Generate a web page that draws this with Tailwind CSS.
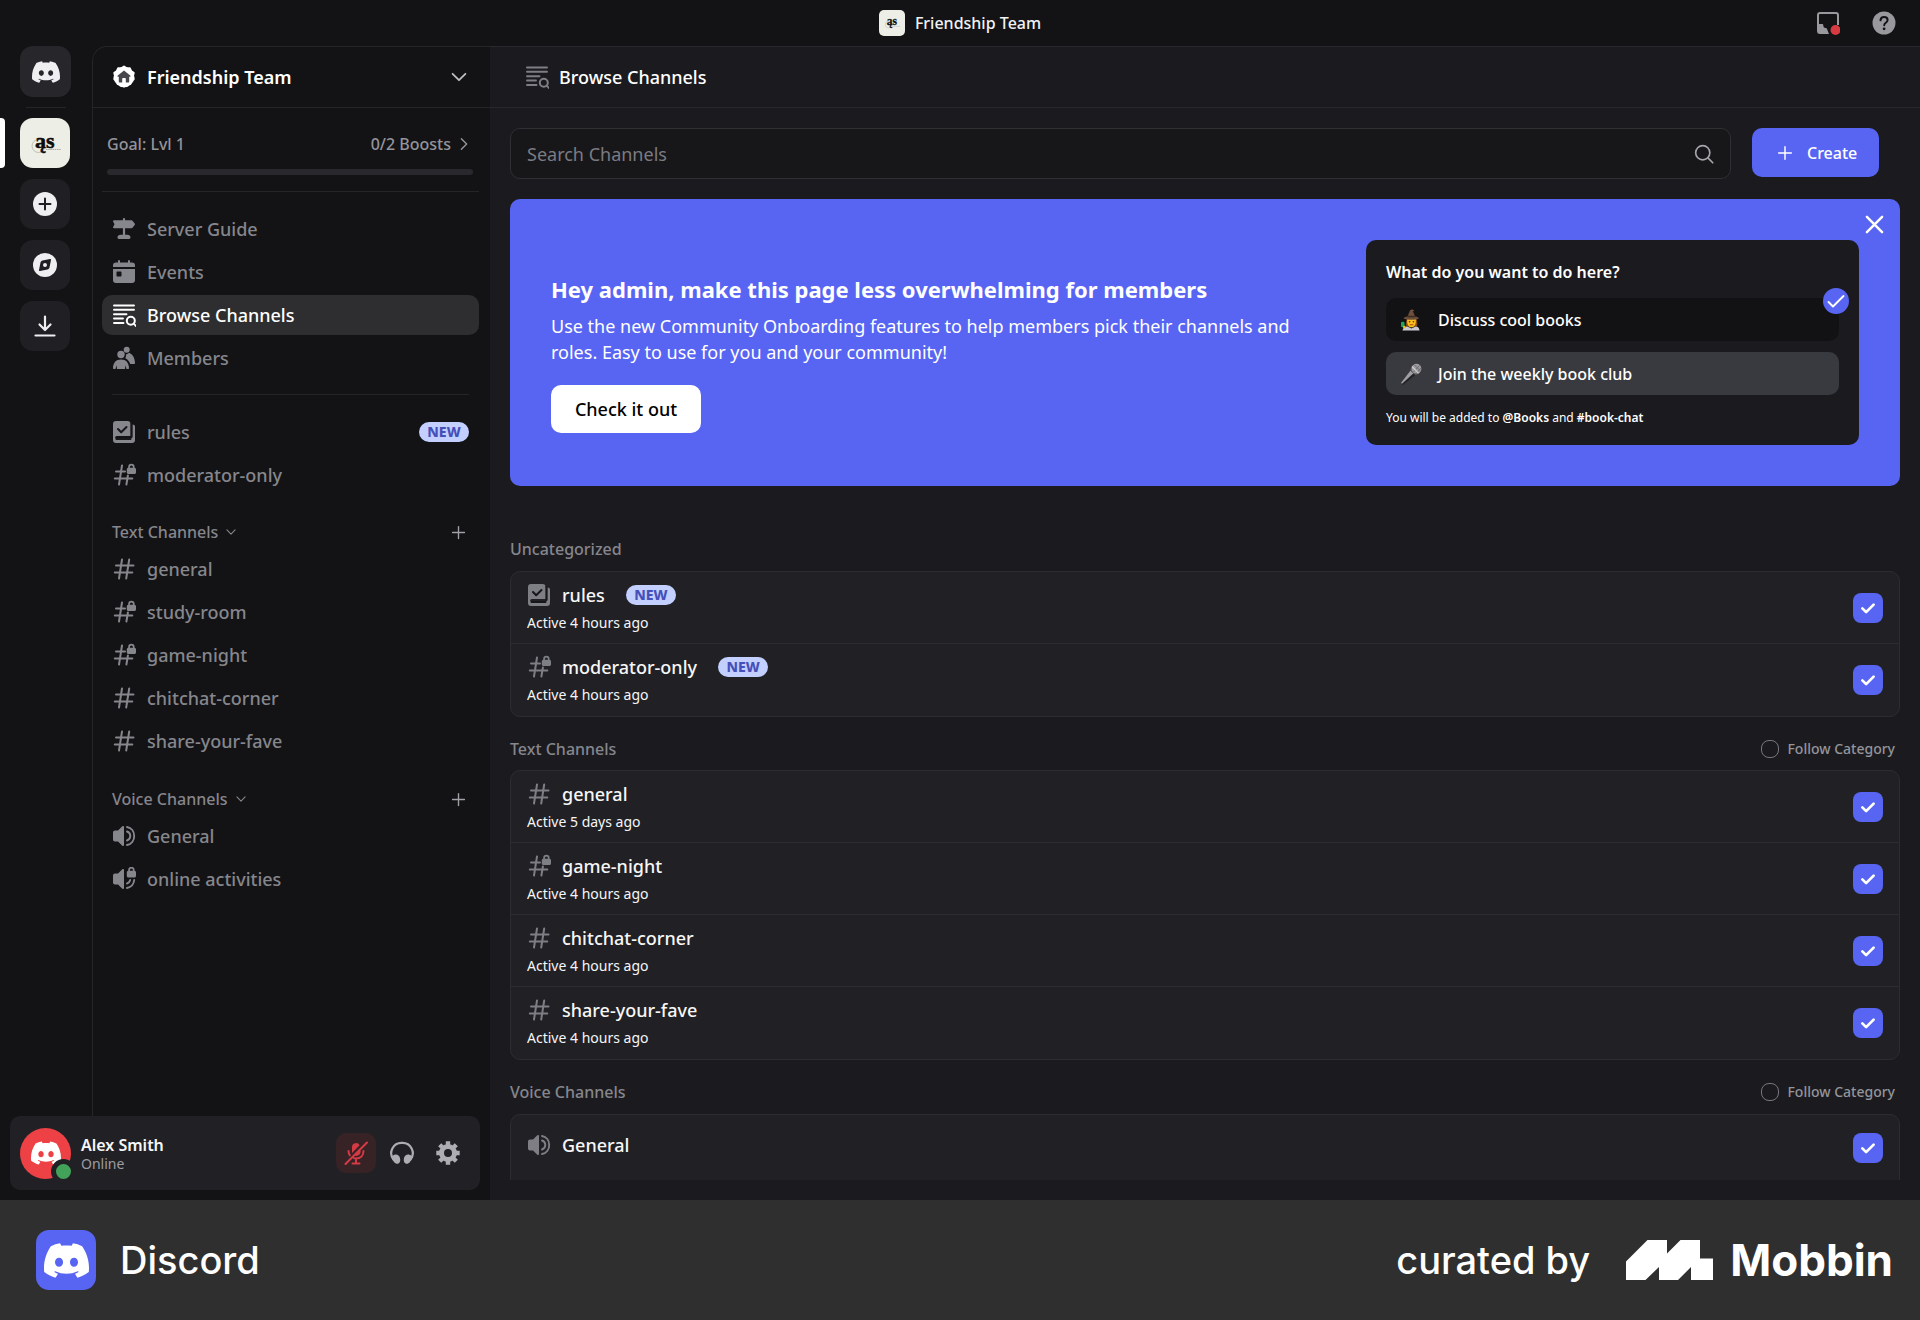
<!DOCTYPE html>
<html lang="en">
<head>
<meta charset="utf-8">
<title>Discord | Browse Channels</title>
<script src="https://cdn.jsdelivr.net/npm/@tailwindcss/browser@4"></script>
</head>
<body class="flex h-screen flex-col overflow-hidden bg-[#131315] font-['Noto_Sans',sans-serif] text-[18px] leading-6 text-[#86868d]">

<!-- Icon set -->
<svg class="hidden" aria-hidden="true">
  <symbol id="discord" viewBox="0 0 24 24"><path fill="currentColor" d="M20.317 4.3698a19.7913 19.7913 0 00-4.8851-1.5152.0741.0741 0 00-.0785.0371c-.211.3753-.4447.8648-.6083 1.2495-1.8447-.2762-3.68-.2762-5.4868 0-.1636-.3933-.4058-.8742-.6177-1.2495a.077.077 0 00-.0785-.037 19.7363 19.7363 0 00-4.8852 1.515.0699.0699 0 00-.0321.0277C.5334 9.0458-.319 13.5799.0992 18.0578a.0824.0824 0 00.0312.0561c2.0528 1.5076 4.0413 2.4228 5.9929 3.0294a.0777.0777 0 00.0842-.0276c.4616-.6304.8731-1.2952 1.226-1.9942a.076.076 0 00-.0416-.1057c-.6528-.2476-1.2743-.5495-1.8722-.8923a.077.077 0 01-.0076-.1277c.1258-.0943.2517-.1923.3718-.2914a.0743.0743 0 01.0776-.0105c3.9278 1.7933 8.18 1.7933 12.0614 0a.0739.0739 0 01.0785.0095c.1202.099.246.1981.3728.2924a.077.077 0 01-.0066.1276 12.2986 12.2986 0 01-1.873.8914.0766.0766 0 00-.0407.1067c.3604.698.7719 1.3628 1.225 1.9932a.076.076 0 00.0842.0286c1.961-.6067 3.9495-1.5219 6.0023-3.0294a.077.077 0 00.0313-.0552c.5004-5.177-.8382-9.6739-3.5485-13.6604a.061.061 0 00-.0312-.0286zM8.02 15.3312c-1.1825 0-2.1569-1.0857-2.1569-2.419 0-1.3332.9555-2.4189 2.157-2.4189 1.2108 0 2.1757 1.0952 2.1568 2.419 0 1.3332-.9555 2.4189-2.1569 2.4189zm7.9748 0c-1.1825 0-2.1569-1.0857-2.1569-2.419 0-1.3332.9554-2.4189 2.1569-2.4189 1.2108 0 2.1757 1.0952 2.1568 2.419 0 1.3332-.946 2.4189-2.1568 2.4189Z"/></symbol>
  <symbol id="hash" viewBox="0 0 24 24"><path fill="none" stroke="currentColor" stroke-width="2" stroke-linecap="round" d="M10 2.5 7 21.500M17.200 2.500l-3 19M4 8.500h17.500M2.800 15.500h17.500"/></symbol>
  <symbol id="hash-lock" viewBox="0 0 24 24"><path fill="none" stroke="currentColor" stroke-width="2" stroke-linecap="round" d="M10 2.500 7 21.500M15.900 12.500l-1.500 9M4 8.500h9M2.800 15.500h17.500"/><path fill="currentColor" fill-rule="evenodd" d="M16.200 4.800V4a3.200 3.200 0 0 1 6.400 0v.8c.8.100 1.400.7 1.400 1.500v3.200c0 .8-.7 1.500-1.500 1.500h-6.200c-.8 0-1.500-.7-1.500-1.500V6.300c0-.8.600-1.400 1.400-1.500Zm1.700 0h3V4a1.500 1.500 0 0 0-3 0Z"/></symbol>
  <symbol id="browse" viewBox="0 0 24 24"><path fill="none" stroke="currentColor" stroke-width="1.9" stroke-linecap="round" d="M2 2.500h20M2 6.800h20M2 11.200h12.500M2 15.500h9M2 20h9.500M21.700 20.700 24 23"/><circle cx="18.800" cy="17.800" r="4" fill="none" stroke="currentColor" stroke-width="2"/></symbol>
  <symbol id="guide" viewBox="0 0 24 24"><path fill="currentColor" d="M10.900 2a1.100 1.100 0 0 1 2.200 0v1.300h6.300c.5 0 1 .2 1.300.6l2 2.500c.4.500.4 1.200 0 1.700l-2 2.500c-.3.400-.8.600-1.300.6h-6.300v6.600h2.400c1.700 0 3 1.100 3 2.700 0 .8-.6 1.400-1.400 1.400H6.900c-.8 0-1.400-.6-1.400-1.400 0-1.600 1.300-2.700 3-2.700h2.400v-6.600H2c-.8 0-1.200-.8-.8-1.400L2.500 7.200 1.200 4.700c-.4-.6 0-1.400.8-1.400h8.900Z"/></symbol>
  <symbol id="calendar" viewBox="0 0 24 24"><path fill="currentColor" d="M6 1a1 1 0 0 1 2 0v1.500h8V1a1 1 0 0 1 2 0v1.500h2A3 3 0 0 1 23 5.500V7H1V5.500a3 3 0 0 1 3-3h2Z"/><path fill="currentColor" fill-rule="evenodd" d="M1 9h22v11a3 3 0 0 1-3 3H4a3 3 0 0 1-3-3Zm3.500 3.200v3.600c0 .4.300.7.700.7h3.600c.4 0 .7-.3.700-.7v-3.600c0-.4-.3-.7-.7-.7H5.200c-.4 0-.7.300-.7.700Z"/></symbol>
  <symbol id="members" viewBox="0 0 24 24"><circle cx="14.700" cy="3.800" r="3" fill="currentColor"/><circle cx="9" cy="8.500" r="3.700" fill="currentColor"/><path fill="currentColor" d="M1 22.300c0-5.400 3-8.800 8-8.800s8 3.400 8 8.800c0 .5-.3.700-.8.700h-1.700l-1-3.800L13 23H5l-.5-3.800-1 3.800H1.800c-.5 0-.8-.2-.8-.7ZM14 8.200c1.200 0 2.300-.6 3-1.500 3.600 1.500 6 5.300 6 10.300 0 .6-.4 1-1 1h-3.800c-.8-2.300-2.300-4.400-4.900-5.700a5 5 0 0 0 .7-4.100Z"/></symbol>
  <symbol id="rules" viewBox="0 0 24 24"><path fill="currentColor" fill-rule="evenodd" d="M4 1h11.500a3 3 0 0 1 3 3v12H5a2 2 0 0 0-1.800 1.200c-.3.700.2 1.300.9 1.300h14.400a2 2 0 0 0 2-2V4.500c1.500 0 2.500.8 2.500 2V20a3 3 0 0 1-3 3H4a3 3 0 0 1-3-3V4a3 3 0 0 1 3-3Z"/><path fill="none" stroke="#17171a" stroke-width="2" stroke-linecap="round" stroke-linejoin="round" d="m6 9 3.200 3.200L14.500 7M4.500 19h14"/><path d="M19.500 3v14.500" stroke="#17171a" stroke-width="1.700"/></symbol>
  <symbol id="speaker" viewBox="0 0 24 24"><path fill="currentColor" d="M12 3v18a1 1 0 0 1-1.700.7L6 17.500H3a2 2 0 0 1-2-2v-7a2 2 0 0 1 2-2h3l4.300-4.200A1 1 0 0 1 12 3Z"/><path fill="none" stroke="currentColor" stroke-width="1.900" stroke-linecap="round" d="M15 7.500c2.300.8 3.300 2.500 3.300 4.500s-1 3.700-3.300 4.500M15 3c4.500.8 7.200 4.500 7.200 9s-2.700 8.200-7.200 9"/></symbol>
  <symbol id="speaker-lock" viewBox="0 0 24 24"><path fill="currentColor" d="M12 3v18a1 1 0 0 1-1.700.7L6 17.500H3a2 2 0 0 1-2-2v-7a2 2 0 0 1 2-2h3l4.300-4.200A1 1 0 0 1 12 3Z"/><path fill="none" stroke="currentColor" stroke-width="1.900" stroke-linecap="round" d="M18.200 13c-.4 1.700-1.500 3-3.200 3.500M22.200 13c-.5 4.200-3.200 7.300-7.200 8"/><path fill="currentColor" fill-rule="evenodd" d="M16.200 3.800V3a3.200 3.200 0 0 1 6.400 0v.8c.8.100 1.400.7 1.400 1.500v3.700c0 .8-.7 1.500-1.500 1.500h-6.200c-.8 0-1.500-.7-1.500-1.500V5.300c0-.8.600-1.400 1.400-1.500Zm1.700 0h3V3a1.500 1.500 0 0 0-3 0Z"/></symbol>
  <symbol id="chevron" viewBox="0 0 24 24"><path fill="none" stroke="currentColor" stroke-width="1.900" stroke-linecap="round" stroke-linejoin="round" d="m5 8.500 7 7 7-7"/></symbol>
  <symbol id="plus" viewBox="0 0 24 24"><path fill="none" stroke="currentColor" stroke-width="2.200" stroke-linecap="round" d="M12 2.500v19M2.500 12h19"/></symbol>
  <symbol id="check" viewBox="0 0 24 24"><path fill="none" stroke="currentColor" stroke-width="3.600" stroke-linecap="round" stroke-linejoin="round" d="m4.500 12.500 5 5 10-10"/></symbol>
  <symbol id="crest" viewBox="0 0 50 50"><rect width="50" height="50" fill="#edeee6"/><circle cx="18.500" cy="28" r="6.500" fill="none" stroke="#a9aaa2" stroke-width=".7"/><path d="M26 31.500h15" stroke="#a9aaa2" stroke-width="1" stroke-dasharray="1.500 .7"/><text x="15" y="29.500" font-family="Liberation Serif, serif" font-weight="700" font-size="22" fill="#0b0b0b" stroke="#0b0b0b" stroke-width=".5">ąs</text></symbol>
</svg>

<header class="grid h-[46px] shrink-0 grid-cols-[1fr_auto_1fr] items-center">
  <div class="col-start-2 flex items-center gap-[10px] text-[16px] font-medium text-[#f1f1f3]">
    <svg class="size-[26px] rounded-[5px]"><use href="#crest"/></svg>
    <span>Friendship Team</span>
  </div>
  <div class="flex items-center justify-end gap-8 pr-6 text-[#98989d]">
    <button aria-label="Inbox"><svg class="block size-6" viewBox="0 0 24 24"><path fill="currentColor" fill-rule="evenodd" d="M4 1h16a3 3 0 0 1 3 3v10h-2V4a1.300 1.300 0 0 0-1-1H4a1 1 0 0 0-1 1v9h3c.8 0 1.300.5 1.300 1.300 0 1.700.8 2.700 2.200 2.700.9 0 1.400.5 1.600 1.300L13 23H4a3 3 0 0 1-3-3V4a3 3 0 0 1 3-3Z"/><circle cx="19.500" cy="19" r="5" fill="#d83a42"/></svg></button>
    <button aria-label="Help"><svg class="block size-6" viewBox="0 0 24 24"><circle cx="12" cy="12" r="11.500" fill="currentColor"/><path d="M8.500 9.300c.2-2 1.600-3.300 3.600-3.300s3.500 1.300 3.500 3.100c0 2.700-3.400 2.600-3.400 5.100" fill="none" stroke="#131315" stroke-width="2" stroke-linecap="round"/><circle cx="12.100" cy="17.800" r="1.400" fill="#131315"/></svg></button>
  </div>
</header>

<div class="flex min-h-0 flex-1">
  <div class="flex w-[490px] shrink-0 flex-col">
    <div class="flex min-h-0 flex-1">
      <!-- Server rail -->
      <nav aria-label="Servers" class="flex w-[92px] shrink-0 flex-col gap-[11px] text-[#efeff1]">
        <a href="#" aria-label="Direct Messages" class="ml-5 grid size-[51px] place-items-center rounded-[13px] bg-[#27272b]"><svg class="size-7"><use href="#discord"/></svg></a>
        <hr class="-my-px ml-[26px] w-10 border-[#252528]">
        <a href="#" aria-label="Friendship Team" class="flex items-center gap-[15px]"><span class="h-[50px] w-[5px] rounded-r-[4px] bg-white"></span><svg class="size-[50px] rounded-[13px]"><use href="#crest"/></svg></a>
        <a href="#" aria-label="Add a Server" class="ml-5 grid size-[50px] place-items-center rounded-[13px] bg-[#202024]"><svg class="size-6" viewBox="0 0 24 24"><circle cx="12" cy="12" r="12" fill="currentColor"/><path d="M12 6.500v11M6.500 12h11" stroke="#202024" stroke-width="2" stroke-linecap="round"/></svg></a>
        <a href="#" aria-label="Discover" class="ml-5 grid size-[50px] place-items-center rounded-[13px] bg-[#202024]"><svg class="size-6" viewBox="0 0 24 24"><circle cx="12" cy="12" r="12" fill="currentColor"/><path fill="#202024" fill-rule="evenodd" d="M9.500 7.500 17 6c.6-.1 1.100.4 1 1l-1.500 7.500c-.3 1-1 1.700-2 2L7 18c-.6.100-1.100-.4-1-1l1.500-7.500c.3-1 1-1.700 2-2ZM12 14a2 2 0 1 0 0-4 2 2 0 0 0 0 4Z"/></svg></a>
        <a href="#" aria-label="Download Apps" class="ml-5 grid size-[50px] place-items-center rounded-[13px] bg-[#202024]"><svg class="size-6" viewBox="0 0 24 24"><path fill="none" stroke="currentColor" stroke-width="2.200" stroke-linecap="round" stroke-linejoin="round" d="M12 2.500v13M6.500 10.500l5.500 5.500 5.500-5.500M2.500 21.500h19"/></svg></a>
      </nav>

      <!-- Channel sidebar -->
      <aside class="min-w-0 flex-1 rounded-tl-[15px] border-t border-l border-[#252528]">
        <button class="flex h-[61px] w-full items-center gap-[11px] border-b border-[#252528] pr-5 pl-[19px] text-left font-semibold text-white">
          <svg class="size-6" viewBox="0 0 24 24"><path fill="#fff" stroke="#fff" stroke-width="2" stroke-linejoin="round" d="m12 1.500 2.600 1.900 3.200-.2 1.200 3 2.700 1.700-.8 3.100.8 3.100-2.700 1.700-1.200 3-3.200-.2L12 21.500l-2.600-2.900-3.200.2-1.200-3-2.700-1.700.8-3.100L2.300 7.900 5 6.200l1.200-3 3.200.2Z"/><circle cx="12" cy="12" r="10.300" fill="#fff"/><path fill="#46464c" d="m12 5.500 6.200 5c.6.600.4 1.300-.4 1.300h-.6v4.700c0 .7-.3 1-1 1h-2.400v-3.700c0-.5-.3-.8-.8-.8h-2c-.5 0-.8.300-.8.800v3.700H7.800c-.7 0-1-.3-1-1v-4.700h-.6c-.8 0-1-.7-.4-1.300Z"/></svg>
          <span class="flex-1">Friendship Team</span>
          <svg class="size-[22px] text-[#c0c0c4]"><use href="#chevron"/></svg>
        </button>

        <div class="mr-[11px] ml-[9px] border-b border-[#252528] pt-6 pr-[6px] pb-4 pl-[5px]">
          <div class="flex items-center text-[16px] font-medium text-[#94949b]">
            <span class="flex-1">Goal: Lvl 1</span>
            <a href="#" class="flex items-center gap-1">0/2 Boosts <svg class="size-[18px] -rotate-90"><use href="#chevron"/></svg></a>
          </div>
          <div class="mt-[13px] h-[6px] rounded-[3px] bg-[#29292d]"></div>
        </div>

        <nav aria-label="Channels" class="mt-[17px] mr-[11px] ml-[9px] font-medium">
          <ul class="flex flex-col gap-[3px]">
            <li><a href="#" class="flex h-10 items-center gap-[11px] rounded-[10px] px-[10px]"><svg class="size-6"><use href="#guide"/></svg>Server Guide</a></li>
            <li><a href="#" class="flex h-10 items-center gap-[11px] rounded-[10px] px-[10px]"><svg class="size-6"><use href="#calendar"/></svg>Events</a></li>
            <li><a href="#" aria-current="page" class="flex h-10 items-center gap-[11px] rounded-[10px] bg-[#2e2e30] px-[10px] text-white"><svg class="size-6"><use href="#browse"/></svg>Browse Channels</a></li>
            <li><a href="#" class="flex h-10 items-center gap-[11px] rounded-[10px] px-[10px]"><svg class="size-6"><use href="#members"/></svg>Members</a></li>
          </ul>
          <hr class="mx-[10px] mt-4 mb-[17px] border-[#252528]">
          <ul class="flex flex-col gap-[3px]">
            <li><a href="#" class="flex h-10 items-center gap-[11px] rounded-[10px] px-[10px]"><svg class="size-6"><use href="#rules"/></svg><span class="flex-1">rules</span><span class="w-[50px] rounded-full bg-[#c2cfff] text-center text-[14px] leading-[20px] font-extrabold text-[#4650b8]">NEW</span></a></li>
            <li><a href="#" class="flex h-10 items-center gap-[11px] rounded-[10px] px-[10px]"><svg class="size-6"><use href="#hash-lock"/></svg>moderator-only</a></li>
          </ul>
          <div class="mt-[25px] mb-[5px] flex items-center justify-between pr-[13px] pl-[10px] text-[16px]">
            <button class="flex items-center gap-[6px]">Text Channels <svg class="size-[14px]"><use href="#chevron"/></svg></button>
            <button aria-label="Create Channel"><svg class="block size-[15px] text-[#a0a0a6]"><use href="#plus"/></svg></button>
          </div>
          <ul class="flex flex-col gap-[3px]">
            <li><a href="#" class="flex h-10 items-center gap-[11px] rounded-[10px] px-[10px]"><svg class="size-6"><use href="#hash"/></svg>general</a></li>
            <li><a href="#" class="flex h-10 items-center gap-[11px] rounded-[10px] px-[10px]"><svg class="size-6"><use href="#hash-lock"/></svg>study-room</a></li>
            <li><a href="#" class="flex h-10 items-center gap-[11px] rounded-[10px] px-[10px]"><svg class="size-6"><use href="#hash-lock"/></svg>game-night</a></li>
            <li><a href="#" class="flex h-10 items-center gap-[11px] rounded-[10px] px-[10px]"><svg class="size-6"><use href="#hash"/></svg>chitchat-corner</a></li>
            <li><a href="#" class="flex h-10 items-center gap-[11px] rounded-[10px] px-[10px]"><svg class="size-6"><use href="#hash"/></svg>share-your-fave</a></li>
          </ul>
          <div class="mt-[26px] mb-[5px] flex items-center justify-between pr-[13px] pl-[10px] text-[16px]">
            <button class="flex items-center gap-[6px]">Voice Channels <svg class="size-[14px]"><use href="#chevron"/></svg></button>
            <button aria-label="Create Channel"><svg class="block size-[15px] text-[#a0a0a6]"><use href="#plus"/></svg></button>
          </div>
          <ul class="flex flex-col gap-[3px]">
            <li><a href="#" class="flex h-10 items-center gap-[11px] rounded-[10px] px-[10px]"><svg class="size-6"><use href="#speaker"/></svg>General</a></li>
            <li><a href="#" class="flex h-10 items-center gap-[11px] rounded-[10px] px-[10px]"><svg class="size-6"><use href="#speaker-lock"/></svg>online activities</a></li>
          </ul>
        </nav>
      </aside>
    </div>

    <!-- User panel -->
    <section aria-label="User area" class="mx-[10px] mb-[10px] flex h-[74px] items-center rounded-[10px] bg-[#212125] pr-3 pl-[10px]">
      <div class="relative grid size-[51px] place-items-center rounded-full bg-[#ee4145] text-white">
        <svg class="size-[30px]"><use href="#discord"/></svg>
        <span class="absolute -right-[5px] -bottom-[5px] size-[25px] rounded-full border-[5px] border-[#212125] bg-[#43a25a]"></span>
      </div>
      <div class="ml-[10px] flex-1 pt-[2px]">
        <div class="text-[16px] leading-5 font-semibold text-[#f6f6f7]">Alex Smith</div>
        <div class="text-[14px] leading-[18px] text-[#9c9ca3]">Online</div>
      </div>
      <div class="flex items-center gap-[6px] text-[#adadb3]">
        <button aria-label="Unmute" class="grid size-10 place-items-center rounded-[10px] bg-[#372226] text-[#d43b44]"><svg class="size-6" viewBox="0 0 24 24"><path fill="currentColor" d="M8 6a4 4 0 0 1 7.600-1.700L8 12Z"/><path fill="none" stroke="currentColor" stroke-width="2" stroke-linecap="round" d="M4.500 10c0 1.700.5 3 1.200 4.200M19.500 10c0 4.500-3 7.500-7.500 7.500-.7 0-1.400 0-2-.3M12 18v4M8.500 22.500h7M1.500 23 23 1.500M12.500 14c1.700-.3 3-1.700 3.200-3.500"/></svg></button>
        <button aria-label="Deafen" class="grid size-10 place-items-center"><svg class="size-6" viewBox="0 0 24 24"><path fill="none" stroke="currentColor" stroke-width="2.200" stroke-linecap="round" d="M3.500 18.500A10.300 10.300 0 0 1 12 1.800a10.300 10.300 0 0 1 8.500 16.700"/><path fill="currentColor" d="M4 14c2.800-1.200 5.200.3 6 3 .8 2.800-.2 5.200-2 5.800C5.300 23.300 2.300 20 2 16c.3-1.300 1-1.700 2-2ZM20 14c-2.800-1.200-5.200.3-6 3-.8 2.800.2 5.200 2 5.800 2.700.5 5.700-2.800 6-6.800-.3-1.300-1-1.700-2-2Z"/></svg></button>
        <button aria-label="User Settings" class="grid size-10 place-items-center"><svg class="size-6" viewBox="0 0 24 24"><circle cx="12" cy="12" r="6.500" fill="none" stroke="currentColor" stroke-width="5"/><path stroke="currentColor" stroke-width="4.400" stroke-linejoin="round" d="M12 .3v4M12 19.700v4M.3 12h4M19.700 12h4M3.700 3.700l2.800 2.800M17.500 17.500l2.800 2.800M3.700 20.300l2.800-2.800M17.500 6.500l2.800-2.800"/></svg></button>
      </div>
    </section>
  </div>

  <!-- Browse channels page -->
  <main class="flex min-w-0 flex-1 flex-col border-t border-[#28282c] bg-[#1b1b1f] pb-5">
    <div class="flex h-[61px] shrink-0 items-center gap-[10px] border-b border-[#28282c] pl-[35px] font-medium text-white">
      <svg class="size-6 text-[#7e7e85]"><use href="#browse"/></svg>
      <h1>Browse Channels</h1>
    </div>

    <div class="min-h-0 flex-1 overflow-hidden px-5 pt-5">
      <div class="flex items-start gap-[21px] pr-[21px]">
        <div class="flex h-[51px] flex-1 items-center rounded-[10px] border border-[#2f2f34] bg-[#17171a] pr-4 pl-4">
          <input type="text" aria-label="Search Channels" placeholder="Search Channels" class="h-8 min-w-0 flex-1 bg-transparent outline-none placeholder:text-[#7b7b82]">
          <svg class="size-5 text-[#a5a5aa]" viewBox="0 0 24 24"><circle cx="10.500" cy="10.500" r="8.500" fill="none" stroke="currentColor" stroke-width="2"/><path d="m17 17 5.500 5.500" stroke="currentColor" stroke-width="2" stroke-linecap="round"/></svg>
        </div>
        <button class="flex h-[49px] w-[127px] items-center gap-[14px] rounded-[10px] bg-[#5865f2] pl-[25px] text-[16px] font-medium text-white"><svg class="size-4"><use href="#plus"/></svg>Create</button>
      </div>

      <section class="relative mt-5 flex h-[287px] items-start justify-between rounded-[10px] bg-[#5865f2] px-[41px] pt-[41px] text-white">
        <div class="mr-10 max-w-[760px] pt-[34px]">
          <h2 class="text-[22px] leading-[30px] font-bold">Hey admin, make this page less overwhelming for members</h2>
          <p class="mt-[9px] leading-[26px]">Use the new Community Onboarding features to help members pick their channels and roles. Easy to use for you and your community!</p>
          <button class="mt-5 h-12 w-[150px] rounded-[10px] bg-white font-medium text-black">Check it out</button>
        </div>
        <div class="h-[205px] w-[493px] shrink-0 rounded-[10px] bg-[#1b1b1f] px-5 pt-5">
          <h3 class="text-[16px] font-semibold">What do you want to do here?</h3>
          <div class="relative mt-[14px] flex h-[43px] items-center gap-[16px] rounded-[10px] bg-[#121214] pl-[14px] text-[16px] font-medium">
            <svg class="size-[22px]" viewBox="0 0 22 22"><path fill="#8a4b12" d="M7 9.500h9.500c1 3 1 5.500.5 8H6c-.5-2.500 0-5 1-8Z"/><path fill="#c9c9cf" d="M2.500 21.500c.3-2.700 2.500-3.800 5-4l4 2 4-2c2.500.2 3.800 1.300 4 4Z"/><path fill="#fcc21b" d="M7.300 10h8.400c.7 4.700-1 8.300-4.200 8.300S6.600 14.700 7.300 10Z"/><circle cx="9.600" cy="12.800" r=".8" fill="#4a2b12"/><circle cx="13.400" cy="12.800" r=".8" fill="#4a2b12"/><path stroke="#b0441b" stroke-linecap="round" d="M10 15.800h3"/><path fill="#6d4f3b" d="M10 1.200c1.500-1.200 3.500-.7 4.300.8l-1.500.2 2.400 5.300c1.900.4 3.600 1.100 3.800 2-1.500 1-4.500 1.300-7.500 1.300S5 10.500 3.500 9.500c.2-.9 2-1.600 4-2Z"/><path fill="#3f2c20" d="M7.800 6.800h7.300l.5 1.500H7.200Z"/><path fill="#21a35c" d="M1 13.500c.5-1 3-1 3.500 0v4c-.8 1-2.800 1-3.500 0Z"/><circle cx="4.300" cy="18" r="1.300" fill="#fcc21b"/></svg>
            Discuss cool books
            <span class="absolute -top-[10px] -right-[10px] grid size-[26px] place-items-center rounded-full bg-[#5865f2]"><svg class="size-5" viewBox="0 0 20 20"><path fill="none" stroke="#fff" stroke-width="1.900" stroke-linecap="round" stroke-linejoin="round" d="m2.500 11 4.500 4.500L17.500 5"/></svg></span>
          </div>
          <div class="mt-[11px] flex h-[43px] items-center gap-[16px] rounded-[10px] bg-[#393a3f] pl-[14px] text-[16px] font-medium">
            <svg class="size-[22px]" viewBox="0 0 22 22"><path fill="#242427" d="m10.500 7.500 5 4.500L3 22l-1.500-1.500Z"/><path fill="#a0a0a4" d="m10.500 7.500 3 2.700L2 20.800 1 20Z"/><path fill="#5a5a5f" d="m11.800 3.500 7 7-3.300 1.800-5.500-5Z"/><circle cx="16.500" cy="5.700" r="4.900" fill="#9a9a9e"/><path stroke="#626267" stroke-width=".8" d="m12.500 4.500 5.500 5.500M14.500 2l6 6M13.500 9l6-6.500M16 10.500 21 5"/><path fill="none" stroke="#d2d2d5" stroke-width="1.200" d="m12 3.500 6.500 6.800"/></svg>
            Join the weekly book club
          </div>
          <p class="mt-[14px] text-[12px] leading-[18px]">You will be added to <b class="font-semibold">@Books</b> and <b class="font-semibold">#book-chat</b></p>
        </div>
        <button aria-label="Dismiss" class="absolute top-4 right-4"><svg class="block size-[19px]" viewBox="0 0 20 20"><path stroke="#fff" stroke-width="2.600" stroke-linecap="round" d="m2 2 16 16M18 2 2 18"/></svg></button>
      </section>

      <h2 class="mt-[51px] text-[16px] font-medium">Uncategorized</h2>
      <ul class="mt-[10px] divide-y divide-[#2d2d31] rounded-[10px] border border-[#2d2d31] bg-[#212125] font-medium text-[#f6f6f7]">
        <li class="flex h-[72px] items-center justify-between px-4">
          <div><div class="flex items-center gap-[11px]"><svg class="size-6 text-[#7e7e85]"><use href="#rules"/></svg><a href="#">rules</a><span class="ml-[10px] w-[50px] rounded-full bg-[#c2cfff] text-center text-[14px] leading-[20px] font-extrabold text-[#4650b8]">NEW</span></div><p class="mt-[6px] text-[14px] leading-5 font-normal">Active 4 hours ago</p></div>
          <label class="grid text-white"><input type="checkbox" checked aria-label="Show rules" class="col-start-1 row-start-1 size-[30px] appearance-none rounded-[8px] bg-[#5865f2]"><svg class="col-start-1 row-start-1 size-[18px] place-self-center"><use href="#check"/></svg></label>
        </li>
        <li class="flex h-[72px] items-center justify-between px-4">
          <div><div class="flex items-center gap-[11px]"><svg class="size-6 text-[#7e7e85]"><use href="#hash-lock"/></svg><a href="#">moderator-only</a><span class="ml-[10px] w-[50px] rounded-full bg-[#c2cfff] text-center text-[14px] leading-[20px] font-extrabold text-[#4650b8]">NEW</span></div><p class="mt-[6px] text-[14px] leading-5 font-normal">Active 4 hours ago</p></div>
          <label class="grid text-white"><input type="checkbox" checked aria-label="Show moderator-only" class="col-start-1 row-start-1 size-[30px] appearance-none rounded-[8px] bg-[#5865f2]"><svg class="col-start-1 row-start-1 size-[18px] place-self-center"><use href="#check"/></svg></label>
        </li>
      </ul>

      <div class="mt-5 flex items-center justify-between pr-[5px] font-medium">
        <h2 class="text-[16px]">Text Channels</h2>
        <label class="flex items-center gap-2 text-[14px] text-[#94949b]"><input type="checkbox" class="size-[18px] appearance-none rounded-[8px] border border-[#77777e]">Follow Category</label>
      </div>
      <ul class="mt-[9px] divide-y divide-[#2d2d31] rounded-[10px] border border-[#2d2d31] bg-[#212125] font-medium text-[#f6f6f7]">
        <li class="flex h-[72px] items-center justify-between px-4">
          <div><div class="flex items-center gap-[11px]"><svg class="size-6 text-[#7e7e85]"><use href="#hash"/></svg><a href="#">general</a></div><p class="mt-[6px] text-[14px] leading-5 font-normal">Active 5 days ago</p></div>
          <label class="grid text-white"><input type="checkbox" checked aria-label="Show general" class="col-start-1 row-start-1 size-[30px] appearance-none rounded-[8px] bg-[#5865f2]"><svg class="col-start-1 row-start-1 size-[18px] place-self-center"><use href="#check"/></svg></label>
        </li>
        <li class="flex h-[72px] items-center justify-between px-4">
          <div><div class="flex items-center gap-[11px]"><svg class="size-6 text-[#7e7e85]"><use href="#hash-lock"/></svg><a href="#">game-night</a></div><p class="mt-[6px] text-[14px] leading-5 font-normal">Active 4 hours ago</p></div>
          <label class="grid text-white"><input type="checkbox" checked aria-label="Show game-night" class="col-start-1 row-start-1 size-[30px] appearance-none rounded-[8px] bg-[#5865f2]"><svg class="col-start-1 row-start-1 size-[18px] place-self-center"><use href="#check"/></svg></label>
        </li>
        <li class="flex h-[72px] items-center justify-between px-4">
          <div><div class="flex items-center gap-[11px]"><svg class="size-6 text-[#7e7e85]"><use href="#hash"/></svg><a href="#">chitchat-corner</a></div><p class="mt-[6px] text-[14px] leading-5 font-normal">Active 4 hours ago</p></div>
          <label class="grid text-white"><input type="checkbox" checked aria-label="Show chitchat-corner" class="col-start-1 row-start-1 size-[30px] appearance-none rounded-[8px] bg-[#5865f2]"><svg class="col-start-1 row-start-1 size-[18px] place-self-center"><use href="#check"/></svg></label>
        </li>
        <li class="flex h-[72px] items-center justify-between px-4">
          <div><div class="flex items-center gap-[11px]"><svg class="size-6 text-[#7e7e85]"><use href="#hash"/></svg><a href="#">share-your-fave</a></div><p class="mt-[6px] text-[14px] leading-5 font-normal">Active 4 hours ago</p></div>
          <label class="grid text-white"><input type="checkbox" checked aria-label="Show share-your-fave" class="col-start-1 row-start-1 size-[30px] appearance-none rounded-[8px] bg-[#5865f2]"><svg class="col-start-1 row-start-1 size-[18px] place-self-center"><use href="#check"/></svg></label>
        </li>
      </ul>

      <div class="mt-5 flex items-center justify-between pr-[5px] font-medium">
        <h2 class="text-[16px]">Voice Channels</h2>
        <label class="flex items-center gap-2 text-[14px] text-[#94949b]"><input type="checkbox" class="size-[18px] appearance-none rounded-[8px] border border-[#77777e]">Follow Category</label>
      </div>
      <ul class="mt-[10px] divide-y divide-[#2d2d31] rounded-[10px] border border-[#2d2d31] bg-[#212125] font-medium text-[#f6f6f7]">
        <li class="flex h-[82px] items-start justify-between px-4 pt-[18px]">
          <div class="flex items-center gap-[11px]"><svg class="size-6 text-[#7e7e85]"><use href="#speaker"/></svg><a href="#">General</a></div>
          <label class="grid text-white"><input type="checkbox" checked aria-label="Show General" class="col-start-1 row-start-1 size-[30px] appearance-none rounded-[8px] bg-[#5865f2]"><svg class="col-start-1 row-start-1 size-[18px] place-self-center"><use href="#check"/></svg></label>
        </li>
      </ul>
    </div>
  </main>
</div>

<footer class="flex h-[120px] shrink-0 items-center justify-between bg-[#2f2f2f] pr-[27px] pl-9 font-['Inter',sans-serif] text-[38px] leading-[48px] font-medium text-white">
  <div class="flex items-center gap-6">
    <span class="grid size-[60px] place-items-center rounded-[13px] bg-[#5865f2]"><svg class="size-[45px]"><use href="#discord"/></svg></span>
    <span>Discord</span>
  </div>
  <div class="flex items-center">
    <span>curated by</span>
    <svg class="ml-9 h-10 w-[87px]" viewBox="0 0 87 40"><path fill="#fff" d="M0 21.500 21.500 0H41v13.500L54.500 0H74v18.500h13V40H65V27L52 40H33V27L19.500 40H0Z"/></svg>
    <span class="ml-[17px] text-[44px] font-bold">Mobbin</span>
  </div>
</footer>
</body>
</html>
